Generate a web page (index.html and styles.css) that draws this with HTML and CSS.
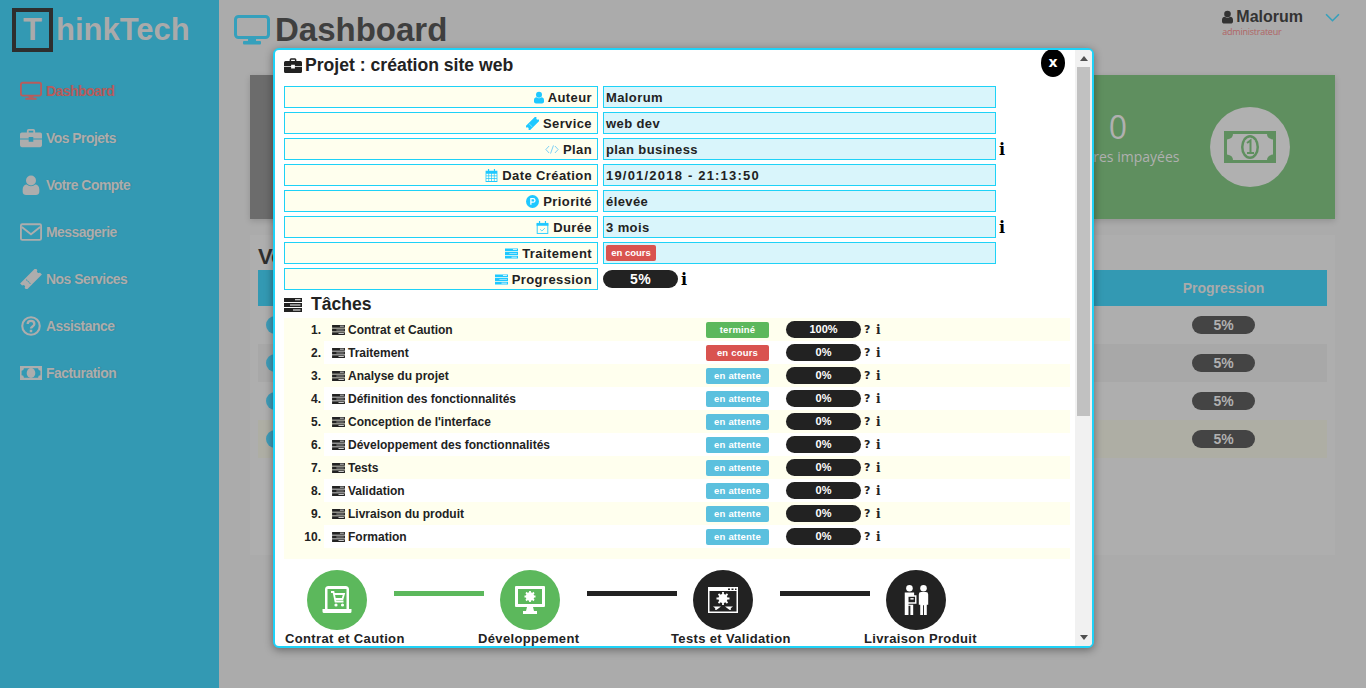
FILE: index.html
```html
<!DOCTYPE html>
<html lang="fr">
<head>
    <meta charset="UTF-8">
    <meta name="viewport" content="width=device-width, initial-scale=1.0">
    <title>ThinkTech - Dashboard</title>
    <link rel="stylesheet" href="styles.css">
</head>
<body>
    <svg class="sprite" xmlns="http://www.w3.org/2000/svg">
        <symbol id="i-desktop" viewBox="0 0 36 30">
            <rect x="1.5" y="1.5" width="33" height="21" rx="3" fill="none" stroke="currentColor" stroke-width="3"/>
            <rect x="14" y="23" width="8" height="3" fill="currentColor"/>
            <rect x="9" y="26" width="18" height="3.5" rx="1" fill="currentColor"/>
        </symbol>
        <symbol id="i-briefcase" viewBox="0 0 24 20">
            <path fill="currentColor" fill-rule="evenodd" d="M7.5 4V2.2A2 2 0 0 1 9.5.2h5a2 2 0 0 1 2 2V4H22a2 2 0 0 1 2 2v4.5H14.5V9h-5v1.5H0V6a2 2 0 0 1 2-2zM9.500 4h5V2.200h-5zM0 11.500h9.500V14h5v-2.500H24V18a2 2 0 0 1-2 2H2a2 2 0 0 1-2-2z"/>
        </symbol>
        <symbol id="i-user" viewBox="0 0 20 24">
            <circle cx="10" cy="6.500" r="6" fill="currentColor"/>
            <path fill="currentColor" d="M0 20v-3c0-3.500 2.500-5.500 5-5.500 3 2.500 7 2.500 10 0 2.500 0 5 2 5 5.500v3c0 2.500-2 4-4 4H4c-2 0-4-1.500-4-4z"/>
        </symbol>
        <symbol id="i-envelope" viewBox="0 0 24 19">
            <rect x="1" y="1" width="22" height="17" rx="1.500" fill="none" stroke="currentColor" stroke-width="2"/>
            <path d="M2 4l10 8 10-8" fill="none" stroke="currentColor" stroke-width="2"/>
        </symbol>
        <symbol id="i-ticket" viewBox="0 0 24 24">
            <g transform="rotate(-45 12 12)">
                <path fill="currentColor" fill-rule="evenodd" d="M-1 6.500h26v3.500a2 2 0 0 0 0 4v3.500H-1V14a2 2 0 0 0 0-4zM7 8.500v1.800h1V8.500zM7 11v2h1v-2zM7 13.700v1.800h1v-1.800z"/>
            </g>
        </symbol>
        <symbol id="i-question" viewBox="0 0 24 24">
            <circle cx="12" cy="12" r="10.500" fill="none" stroke="currentColor" stroke-width="2.500"/>
            <path d="M8 9.500c0-5 8-5 8 0 0 3-4 3-4 5.500" fill="none" stroke="currentColor" stroke-width="2.800"/>
            <rect x="10.500" y="16.500" width="3" height="3" fill="currentColor"/>
        </symbol>
        <symbol id="i-money" viewBox="0 0 28 18">
            <path fill="currentColor" fill-rule="evenodd" d="M0 0h28v18H0zM5 3a3 3 0 0 1-3 3v6a3 3 0 0 1 3 3h18a3 3 0 0 1 3-3V6a3 3 0 0 1-3-3z"/>
            <ellipse cx="14" cy="9" rx="5.500" ry="6.500" fill="currentColor"/>
        </symbol>
        <symbol id="i-code" viewBox="0 0 24 16">
            <path d="M7 2L1.500 8 7 14M17 2l5.500 6L17 14M14.500 1l-5 14" fill="none" stroke="currentColor" stroke-width="1.500"/>
        </symbol>
        <symbol id="i-calendar" viewBox="0 0 20 22">
            <path fill="currentColor" fill-rule="evenodd" d="M0 3h4V0h2v3h8V0h2v3h4v19H0zM1.300 8v3h3.500V8zM6 8v3h3.400V8zM10.600 8v3H14V8zM15.200 8v3h3.500V8zM1.300 12.200v3h3.500v-3zM6 12.200v3h3.400v-3zM10.600 12.200v3H14v-3zM15.200 12.200v3h3.500v-3zM1.300 16.400v4h3.500v-4zM6 16.400v4h3.400v-4zM10.600 16.400v4H14v-4zM15.200 16.400v4h3.500v-4z"/>
        </symbol>
        <symbol id="i-calcheck" viewBox="0 0 20 22">
            <rect x="1" y="4" width="18" height="17" fill="none" stroke="currentColor" stroke-width="1.500"/>
            <path d="M0 4h20v4H0zM4 0h2v5H4zM14 0h2v5h-2z" fill="currentColor"/>
            <path d="M6 14l3 3 5-5" fill="none" stroke="currentColor" stroke-width="1.200"/>
        </symbol>
        <symbol id="i-tasks" viewBox="0 0 18 14">
            <path fill="currentColor" d="M0 0h18v4H0zM0 5h18v4H0zM0 10h18v4H0z"/>
            <path fill="#fff" d="M11 1.200h5.500v1H11zM6 6.500h10.500v1H6zM9 11.500h7.500v1H9z"/>
        </symbol>
        <symbol id="i-priority" viewBox="0 0 20 20">
            <circle cx="10" cy="10" r="10" fill="currentColor"/>
            <path d="M7.500 15V5.500H11a2.800 2.800 0 0 1 0 5.600H7.500" fill="none" stroke="#fff" stroke-width="2"/>
        </symbol>
        <symbol id="i-shop" viewBox="0 0 30 30">
            <path fill="#fff" fill-rule="evenodd" d="M3 4.500A3.500 3.500 0 0 1 6.500 1h17A3.500 3.500 0 0 1 27 4.500V24h2.500v2.500A1.500 1.500 0 0 1 28 28H2a1.500 1.500 0 0 1-1.500-1.500V24H3zM5.500 4v20h19V4z"/>
            <path d="M9 7h2.500l2 9.500h8M12 9h10l-1.500 5h-7.500" fill="none" stroke="#fff" stroke-width="1.800"/>
            <circle cx="14" cy="20" r="1.600" fill="#fff"/>
            <circle cx="20.500" cy="20" r="1.600" fill="#fff"/>
        </symbol>
        <symbol id="i-config" viewBox="0 0 30 28">
            <path fill="#fff" fill-rule="evenodd" d="M1 0h28a1 1 0 0 1 1 1v19a1 1 0 0 1-1 1H1a1 1 0 0 1-1-1V1a1 1 0 0 1 1-1zM3 3v15h24V3z"/>
            <path fill="#fff" d="M12 21h6l1 4h3v3H8v-3h3z"/>
            <circle cx="15" cy="10.500" r="3" fill="none" stroke="#fff" stroke-width="2.500"/>
            <path d="M15 5v11M9.500 10.500h11M11 6.500l8 8M19 6.500l-8 8" stroke="#fff" stroke-width="1.800"/>
        </symbol>
        <symbol id="i-window" viewBox="0 0 30 26">
            <path fill="#fff" fill-rule="evenodd" d="M0 0h30v26H0zM1.500 4v20.500h27V4z"/>
            <path d="M20 1.500h2v1.500h-2zM23.500 1.500h2v1.500h-2zM27 1.500h1.500v1.500H27z" fill="#222"/>
            <circle cx="15" cy="11.500" r="4.500" fill="#fff"/>
            <path d="M15 5v13M8.500 11.500h13M10.500 7l9 9M19.500 7l-9 9" stroke="#fff" stroke-width="1.800"/>
            <path d="M5 19.500h8l-4 3zM17 19.500h8l-4 3z" fill="#fff"/>
            <path d="M8 20v3M22 20v3" stroke="#fff" stroke-width="1.500"/>
        </symbol>
        <symbol id="i-delivery" viewBox="0 0 30 32">
            <circle cx="8" cy="3.500" r="3.500" fill="#fff"/>
            <circle cx="23" cy="3.500" r="3.500" fill="#fff"/>
            <path fill="#fff" d="M3 8h10v4H7v9h5v11H9v-10H7v10H3zM18 10a2.500 2.500 0 0 1 2.500-2.500h5A2.500 2.500 0 0 1 28 10v11h-1.500v11h-3V21.500h-1V32h-3V21H18z"/>
            <path fill="#fff" fill-rule="evenodd" d="M5 11h10.500v9H5zM6.500 12.500v6H14v-6z"/>
            <path fill="#fff" d="M9 14h3.500v1.500H9z"/>
        </symbol>
    </svg>

    <aside class="sidebar">
        <div class="logo"><span class="logo-box">T</span>hinkTech</div>
        <nav>
            <a class="nav-item active"><svg class="nav-icon"><use href="#i-desktop"/></svg>Dashboard</a>
            <a class="nav-item"><svg class="nav-icon"><use href="#i-briefcase"/></svg>Vos Projets</a>
            <a class="nav-item"><svg class="nav-icon"><use href="#i-user"/></svg>Votre Compte</a>
            <a class="nav-item"><svg class="nav-icon"><use href="#i-envelope"/></svg>Messagerie</a>
            <a class="nav-item"><svg class="nav-icon"><use href="#i-ticket"/></svg>Nos Services</a>
            <a class="nav-item"><svg class="nav-icon"><use href="#i-question"/></svg>Assistance</a>
            <a class="nav-item"><svg class="nav-icon"><use href="#i-money"/></svg>Facturation</a>
        </nav>
    </aside>

    <main class="main">
        <header class="topbar">
            <svg class="title-icon"><use href="#i-desktop"/></svg>
            <h1>Dashboard</h1>
            <div class="account">
                <div class="account-name"><svg class="account-icon"><use href="#i-user"/></svg>Malorum</div>
                <div class="account-role">administrateur</div>
            </div>
            <svg class="chevron" viewBox="0 0 14 8"><path d="M1 1l6 6 6-6" fill="none" stroke="currentColor" stroke-width="1.500"/></svg>
        </header>

        <section class="cards">
            <div class="card card-grey"></div>
            <div class="card card-green">
                <div class="card-text">
                    <div class="card-count">0</div>
                    <div class="card-label">Factures impayées</div>
                </div>
                <div class="card-round">
                    <svg class="card-money" viewBox="0 0 52 32">
                        <path fill="currentColor" fill-rule="evenodd" d="M0 0h52v32H0zM9 3c0 3-2 5-6 5.500v15C7 24 9 26 9 29h34c0-3 2-5 6-5.500v-15C45 8 43 6 43 3z"/>
                        <ellipse cx="26" cy="16" rx="9" ry="12" fill="currentColor"/>
                        <ellipse cx="26" cy="16" rx="6.500" ry="9.500" fill="#b0b0b0"/>
                        <path d="M23 12l3.500-2.500V22M23 22h7" fill="none" stroke="currentColor" stroke-width="2"/>
                    </svg>
                </div>
            </div>
        </section>

        <section class="panel">
            <h2>Vos Projets</h2>
            <div class="table-head"><span class="col-main"></span><span class="col-prog">Progression</span></div>
            <div class="table-row"><span class="col-main"><i class="row-dot"></i></span><span class="col-prog"><b class="row-pill">5%</b></span></div>
            <div class="table-row even"><span class="col-main"><i class="row-dot"></i></span><span class="col-prog"><b class="row-pill">5%</b></span></div>
            <div class="table-row"><span class="col-main"><i class="row-dot"></i></span><span class="col-prog"><b class="row-pill">5%</b></span></div>
            <div class="table-row tinted"><span class="col-main"><i class="row-dot"></i></span><span class="col-prog"><b class="row-pill">5%</b></span></div>
        </section>
    </main>

    <div class="modal">
        <div class="modal-body">
            <h3 class="modal-title"><svg class="modal-title-icon"><use href="#i-briefcase"/></svg>Projet : création site web</h3>

            <div class="field"><div class="field-label"><svg class="fi fi-user"><use href="#i-user"/></svg>Auteur</div><div class="field-value">Malorum</div></div>
            <div class="field"><div class="field-label"><svg class="fi"><use href="#i-ticket"/></svg>Service</div><div class="field-value">web dev</div></div>
            <div class="field"><div class="field-label"><svg class="fi fi-code"><use href="#i-code"/></svg>Plan</div><div class="field-value">plan business</div><span class="info">i</span></div>
            <div class="field"><div class="field-label"><svg class="fi"><use href="#i-calendar"/></svg>Date Création</div><div class="field-value field-date">19/01/2018 - 21:13:50</div></div>
            <div class="field"><div class="field-label"><svg class="fi"><use href="#i-priority"/></svg>Priorité</div><div class="field-value">élevée</div></div>
            <div class="field"><div class="field-label"><svg class="fi"><use href="#i-calcheck"/></svg>Durée</div><div class="field-value">3 mois</div><span class="info">i</span></div>
            <div class="field"><div class="field-label"><svg class="fi fi-tasks"><use href="#i-tasks"/></svg>Traitement</div><div class="field-value"><span class="badge badge-red badge-inline">en cours</span></div></div>
            <div class="field"><div class="field-label"><svg class="fi fi-tasks"><use href="#i-tasks"/></svg>Progression</div><div class="pill pill-big">5%</div><span class="info">i</span></div>

            <h3 class="tasks-title"><svg class="tasks-icon"><use href="#i-tasks"/></svg>Tâches</h3>
            <ol class="tasks">
                <li class="task"><span class="task-num">1.</span><div class="task-body"><span class="task-name"><svg class="task-icon"><use href="#i-tasks"/></svg>Contrat et Caution</span><span class="badge badge-green">terminé</span><span class="pill">100%</span><span class="mark">?</span><span class="mark-i">i</span></div></li>
                <li class="task"><span class="task-num">2.</span><div class="task-body"><span class="task-name"><svg class="task-icon"><use href="#i-tasks"/></svg>Traitement</span><span class="badge badge-red">en cours</span><span class="pill">0%</span><span class="mark">?</span><span class="mark-i">i</span></div></li>
                <li class="task"><span class="task-num">3.</span><div class="task-body"><span class="task-name"><svg class="task-icon"><use href="#i-tasks"/></svg>Analyse du projet</span><span class="badge badge-blue">en attente</span><span class="pill">0%</span><span class="mark">?</span><span class="mark-i">i</span></div></li>
                <li class="task"><span class="task-num">4.</span><div class="task-body"><span class="task-name"><svg class="task-icon"><use href="#i-tasks"/></svg>Définition des fonctionnalités</span><span class="badge badge-blue">en attente</span><span class="pill">0%</span><span class="mark">?</span><span class="mark-i">i</span></div></li>
                <li class="task"><span class="task-num">5.</span><div class="task-body"><span class="task-name"><svg class="task-icon"><use href="#i-tasks"/></svg>Conception de l'interface</span><span class="badge badge-blue">en attente</span><span class="pill">0%</span><span class="mark">?</span><span class="mark-i">i</span></div></li>
                <li class="task"><span class="task-num">6.</span><div class="task-body"><span class="task-name"><svg class="task-icon"><use href="#i-tasks"/></svg>Développement des fonctionnalités</span><span class="badge badge-blue">en attente</span><span class="pill">0%</span><span class="mark">?</span><span class="mark-i">i</span></div></li>
                <li class="task"><span class="task-num">7.</span><div class="task-body"><span class="task-name"><svg class="task-icon"><use href="#i-tasks"/></svg>Tests</span><span class="badge badge-blue">en attente</span><span class="pill">0%</span><span class="mark">?</span><span class="mark-i">i</span></div></li>
                <li class="task"><span class="task-num">8.</span><div class="task-body"><span class="task-name"><svg class="task-icon"><use href="#i-tasks"/></svg>Validation</span><span class="badge badge-blue">en attente</span><span class="pill">0%</span><span class="mark">?</span><span class="mark-i">i</span></div></li>
                <li class="task"><span class="task-num">9.</span><div class="task-body"><span class="task-name"><svg class="task-icon"><use href="#i-tasks"/></svg>Livraison du produit</span><span class="badge badge-blue">en attente</span><span class="pill">0%</span><span class="mark">?</span><span class="mark-i">i</span></div></li>
                <li class="task"><span class="task-num">10.</span><div class="task-body"><span class="task-name"><svg class="task-icon"><use href="#i-tasks"/></svg>Formation</span><span class="badge badge-blue">en attente</span><span class="pill">0%</span><span class="mark">?</span><span class="mark-i">i</span></div></li>
            </ol>

            <div class="steps">
                <div class="step">
                    <div class="step-top"><div class="step-round done"><svg class="step-icon"><use href="#i-shop"/></svg></div><div class="step-line done"></div></div>
                    <div class="step-label">Contrat et Caution</div>
                </div>
                <div class="step">
                    <div class="step-top"><div class="step-round done"><svg class="step-icon"><use href="#i-config"/></svg></div><div class="step-line"></div></div>
                    <div class="step-label">Développement</div>
                </div>
                <div class="step">
                    <div class="step-top"><div class="step-round"><svg class="step-icon"><use href="#i-window"/></svg></div><div class="step-line"></div></div>
                    <div class="step-label">Tests et Validation</div>
                </div>
                <div class="step">
                    <div class="step-top"><div class="step-round"><svg class="step-icon"><use href="#i-delivery"/></svg></div></div>
                    <div class="step-label">Livraison Produit</div>
                </div>
            </div>
        </div>

        <div class="scrollbar">
            <span class="arrow-up"></span>
            <div class="scroll-track"><div class="scroll-thumb"></div></div>
            <span class="arrow-down"></span>
        </div>

        <div class="modal-close">x</div>
    </div>
</body>
</html>
```

FILE: styles.css
```css
* {
    box-sizing: border-box;
}

html, body {
    margin: 0;
    height: 688px;
    overflow: hidden;
}

body {
    display: flex;
    background-color: #ababab;
    font-family: "Liberation Sans", Arial, sans-serif;
    color: #222;
}

.sprite {
    position: absolute;
    width: 0;
    height: 0;
}

/* sidebar */
.sidebar {
    width: 219px;
    flex-shrink: 0;
    background-color: #3399b3;
    padding-top: 8px;
}

.logo {
    display: flex;
    align-items: center;
    height: 44px;
    margin-left: 12px;
    margin-bottom: 15px;
    font-size: 31px;
    font-weight: bold;
    color: #aaa;
}

.logo-box {
    width: 41px;
    height: 44px;
    border: 4px solid #2e2e2e;
    margin-right: 3px;
    line-height: 36px;
    text-align: center;
}

.nav-item {
    display: flex;
    align-items: center;
    height: 47px;
    padding-left: 20px;
    font-size: 14px;
    font-weight: bold;
    letter-spacing: -0.55px;
    color: #adadad;
    text-shadow: 1px 0 1px rgba(60, 60, 60, 0.2);
}

.nav-item.active {
    color: #b85c5c;
}

.nav-icon {
    width: 22px;
    height: 20px;
    margin-right: 4px;
    flex-shrink: 0;
}

/* main page under the modal */
.main {
    flex: 1;
    padding: 0 31px;
}

.topbar {
    display: flex;
    align-items: center;
    height: 75px;
    margin-left: -16px;
    padding-bottom: 16px;
}

.title-icon {
    width: 36px;
    height: 30px;
    color: #35a0bc;
    margin-right: 5px;
}

h1 {
    margin: 0;
    font-size: 33px;
    color: #3f3f3f;
}

.account {
    align-self: flex-start;
    margin-left: auto;
    margin-top: 8px;
}

.account-name {
    display: flex;
    align-items: center;
    font-size: 16px;
    font-weight: bold;
    color: #333;
}

.account-icon {
    width: 11px;
    height: 14px;
    margin-right: 3px;
}

.account-role {
    font-family: "Open Sans", sans-serif;
    font-size: 9px;
    letter-spacing: -0.25px;
    line-height: 12px;
    color: #b06464;
}

.chevron {
    align-self: flex-start;
    width: 15px;
    height: 9px;
    margin: 13px -5px 0 22px;
    color: #35a0bc;
}

.cards {
    display: flex;
    gap: 16px;
    height: 144px;
}

.card {
    box-shadow: 0 2px 6px rgba(0, 0, 0, 0.15);
}

.card-grey {
    flex: 1;
    background-color: #6c6c6c;
}

.card-green {
    width: 361px;
    display: flex;
    align-items: center;
    background-color: #5f8f5f;
    padding-left: 84px;
    color: #b0b0b0;
}

.card-text {
    width: 120px;
    margin-right: 32px;
    padding-bottom: 21px;
    text-align: center;
    white-space: nowrap;
    font-family: "Open Sans", sans-serif;
}

.card-count {
    font-size: 32px;
    line-height: 40px;
}

.card-label {
    font-size: 14px;
    line-height: 20px;
}

.card-round {
    width: 80px;
    height: 80px;
    border-radius: 50%;
    background-color: #b0b0b0;
    display: flex;
    align-items: center;
    justify-content: center;
}

.card-money {
    width: 52px;
    height: 32px;
    color: #5f8f5f;
}

.panel {
    height: 320px;
    margin-top: 16px;
    padding: 8px;
    background-color: #aeaeae;
}

h2 {
    margin: 0;
    font-size: 22px;
    line-height: 27px;
    color: #2e2e2e;
}

.table-head {
    display: flex;
    align-items: center;
    height: 36px;
    background-color: #3399b3;
    font-size: 14px;
    font-weight: bold;
    color: #aaa;
}

.table-row {
    display: flex;
    align-items: center;
    height: 38px;
}

.table-row.even {
    background-color: #a8a8a8;
}

.table-row.tinted {
    background-color: #aeaea4;
}

.col-main {
    flex: 1;
    padding-left: 8px;
}

.col-prog {
    width: 207px;
    text-align: center;
}

.row-dot {
    display: block;
    width: 40px;
    height: 18px;
    border-radius: 9px;
    background-color: #3f9cb8;
}

.row-pill {
    display: block;
    width: 63px;
    height: 18px;
    margin: 0 auto;
    border-radius: 9px;
    background-color: #444;
    color: #b0b0b0;
    font-size: 14px;
    line-height: 18px;
}

/* modal */
.modal {
    position: absolute;
    left: 273px;
    top: 48px;
    width: 821px;
    height: 600px;
    display: flex;
    border: 2px solid #1ed2f7;
    border-radius: 6px;
    background-color: #fff;
    box-shadow: 0 2px 8px rgba(0, 0, 0, 0.4);
    overflow: hidden;
}

.modal-body {
    flex: 1;
    padding-left: 9px;
    overflow: hidden;
}

.modal-title {
    display: flex;
    align-items: center;
    height: 30px;
    margin: 0 0 6px;
    font-size: 17.6px;
}

.modal-title-icon {
    width: 18px;
    height: 15px;
    margin-right: 3px;
}

.field {
    display: flex;
    align-items: center;
    gap: 5px;
    height: 22px;
    margin-bottom: 4px;
    font-size: 13px;
    font-weight: bold;
    letter-spacing: 0.4px;
}

.field-label {
    display: flex;
    align-items: center;
    justify-content: flex-end;
    width: 314px;
    height: 22px;
    padding-right: 5px;
    border: 1px solid #1ed2f7;
    background-color: #ffffee;
}

.field-value {
    display: flex;
    align-items: center;
    width: 393px;
    height: 22px;
    padding-left: 2px;
    border: 1px solid #1ed2f7;
    background-color: #d9f5fb;
    letter-spacing: 0.4px;
}

.field-date {
    letter-spacing: 1.2px;
}

.fi {
    width: 13px;
    height: 13px;
    margin-right: 4px;
    color: #1ec8ff;
}

.fi-user {
    width: 10px;
}

.fi-code {
    width: 14px;
    color: #6cc8f5;
}

.fi-tasks {
    height: 11px;
}

.info {
    margin-left: -2px;
    font-family: "DejaVu Serif", serif;
    font-size: 16px;
    font-weight: bold;
    color: #000;
}

.pill {
    display: block;
    width: 75px;
    height: 17px;
    margin-left: 17px;
    border-radius: 9px;
    background-color: #222;
    color: #fff;
    font-size: 11px;
    font-weight: bold;
    line-height: 17px;
    text-align: center;
}

.pill-big {
    height: 18px;
    margin-left: 0;
    font-size: 14px;
    line-height: 18px;
}

.badge {
    display: block;
    width: 63px;
    height: 16px;
    border-radius: 2px;
    color: #fff;
    font-size: 9.5px;
    font-weight: bold;
    line-height: 16px;
    text-align: center;
    letter-spacing: 0.2px;
}

.badge-inline {
    width: 50px;
    height: 16px;
    letter-spacing: 0;
}

.badge-green {
    background-color: #5cb85c;
}

.badge-red {
    background-color: #d9534f;
}

.badge-blue {
    background-color: #5bc0de;
}

.tasks-title {
    display: flex;
    align-items: center;
    height: 28px;
    margin: -4px 0 0;
    padding-top: 1px;
    font-size: 17.6px;
}

.tasks-icon {
    width: 18px;
    height: 14px;
    margin-right: 9px;
}

.tasks {
    width: 786px;
    margin: 0;
    padding: 0 0 11px;
    list-style: none;
    background-color: #ffffee;
}

.task {
    display: flex;
    align-items: center;
    height: 23px;
    font-size: 12px;
    font-weight: bold;
}

.task-num {
    width: 37px;
    text-align: right;
}

.task-body {
    display: flex;
    align-items: center;
    height: 23px;
    margin-left: 3px;
    flex: 1;
}

.task:nth-child(even) .task-body {
    background-color: #fff;
}

.task-name {
    display: flex;
    align-items: center;
    width: 382px;
    padding-left: 8px;
}

.task-icon {
    width: 13px;
    height: 10px;
    margin-right: 3px;
}

.mark {
    margin-left: 3px;
    font-family: "DejaVu Sans", sans-serif;
    font-size: 11px;
    font-weight: bold;
    width: 9px;
}

.mark-i {
    margin-left: 3px;
    font-family: "DejaVu Serif", serif;
    font-size: 12px;
    font-weight: bold;
}

.steps {
    display: flex;
    margin-top: 11px;
}

.step {
    width: 193px;
    flex-shrink: 0;
}

.step-top {
    display: flex;
    padding-left: 23px;
}

.step-round {
    display: flex;
    align-items: center;
    justify-content: center;
    width: 60px;
    height: 60px;
    flex-shrink: 0;
    border-radius: 50%;
    background-color: #222;
}

.step-round.done {
    background-color: #5cb85c;
}

.step-icon {
    width: 30px;
    height: 30px;
}

.step-line {
    width: 90px;
    height: 5px;
    flex-shrink: 0;
    margin: 21px 0 0 27px;
    background-color: #222;
}

.step-line.done {
    background-color: #5cb85c;
}

.step-label {
    margin-left: 1px;
    font-size: 13px;
    font-weight: bold;
    line-height: 18px;
    letter-spacing: 0.35px;
    white-space: nowrap;
}

.scrollbar {
    display: flex;
    flex-direction: column;
    align-items: center;
    width: 17px;
    flex-shrink: 0;
    background-color: #f1f1f1;
}

.scroll-track {
    flex: 1;
    width: 100%;
    padding: 0 2px;
}

.scroll-thumb {
    height: 349px;
    background-color: #c1c1c1;
}

.arrow-up, .arrow-down {
    width: 0;
    height: 0;
    border-left: 4px solid transparent;
    border-right: 4px solid transparent;
}

.arrow-up {
    margin: 6px 0 6px;
    border-bottom: 5px solid #505050;
}

.arrow-down {
    margin: 6px 0 6px;
    border-top: 5px solid #505050;
}

.modal-close {
    position: absolute;
    right: 27px;
    top: -1px;
    width: 24px;
    height: 28px;
    border-radius: 50%;
    background-color: #000;
    color: #fff;
    font-family: "DejaVu Sans", sans-serif;
    font-size: 14px;
    font-weight: bold;
    line-height: 27px;
    text-align: center;
}
```
